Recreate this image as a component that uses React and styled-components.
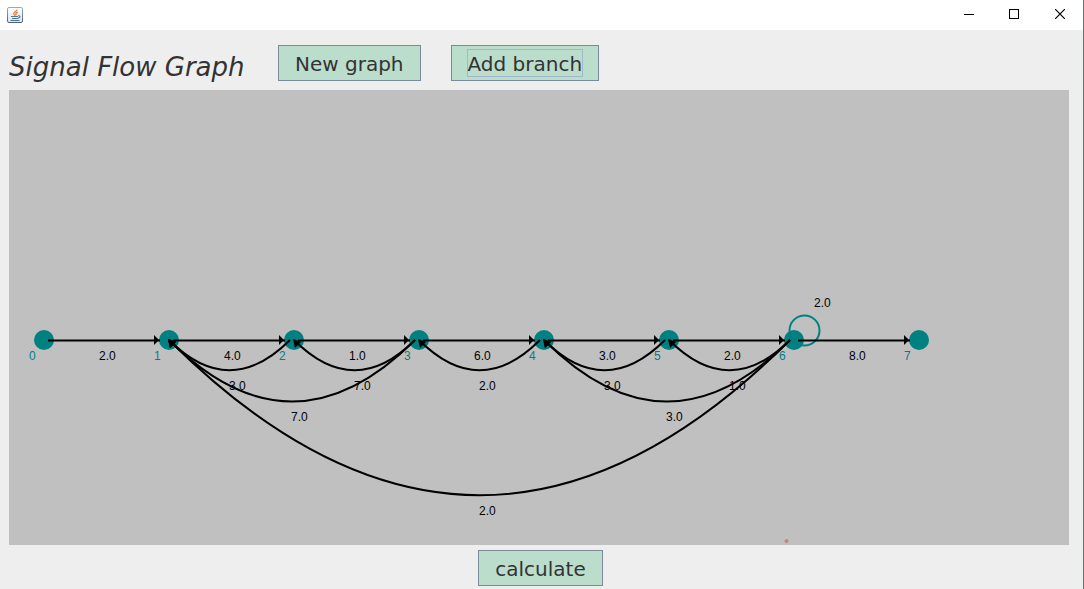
import React from "react";
import styled, { createGlobalStyle } from "styled-components";

const Global = createGlobalStyle`
  *, *::before, *::after { box-sizing: border-box; }
  body { margin: 0; background: #eeeeee; overflow: hidden; }
`;

const Window = styled.div`
  display: flex;
  flex-direction: column;
  min-height: 100vh;
  background: #eeeeee;
  border-right: 1px solid #66706c;
  color: #333333;
  font-family: Verdana, "DejaVu Sans", sans-serif;
`;

const TitleBar = styled.header`
  display: flex;
  align-items: center;
  justify-content: space-between;
  height: 30px;
  padding-left: 7px;
  background: #ffffff;
`;

const WindowControls = styled.div`
  display: flex;
`;

const ControlButton = styled.button`
  display: flex;
  align-items: center;
  justify-content: center;
  width: 46px;
  height: 30px;
  padding: 0 0 2px;
  border: 0;
  background: transparent;
`;

const Content = styled.main`
  display: flex;
  flex: 1;
  flex-direction: column;
  padding: 15px 14px 3px 9px;
`;

const Toolbar = styled.div`
  display: flex;
  align-items: center;
  gap: 30px;
  height: 36px;
  margin-bottom: 9px;
`;

const Title = styled.h1`
  width: 239px;
  margin: 0;
  padding-top: 8px;
  font-size: 26px;
  line-height: 32px;
  font-style: italic;
  font-weight: 400;
  white-space: nowrap;
`;

const ActionButton = styled.button`
  height: 36px;
  padding: 0 15px;
  border: 1px solid #7a8a99;
  border-radius: 0;
  background: #bbddcc;
  color: #333333;
  font-family: inherit;
  font-size: 20px;
  line-height: 26px;
  white-space: nowrap;
`;

const ButtonLabel = styled.span`
  display: block;
  height: 28px;
  padding-top: 1px;
  border: 1px solid ${(p) => (p.$focused ? "#a3b8cc" : "transparent")};
`;

const Canvas = styled.section`
  flex: 1;
  min-height: 455px;
  background: #c0c0c0;
  overflow: hidden;
`;

const Graph = styled.svg`
  display: block;
  font-family: "Liberation Sans", Arial, sans-serif;
  font-size: 12px;
`;

const Footer = styled.footer`
  display: flex;
  justify-content: center;
  padding: 5px 0 0 3px;
`;

const BASE = 250;
const nodeX = (n) => 35 + 125 * n;

const forward = ["2.0", "4.0", "1.0", "6.0", "3.0", "2.0", "8.0"];
const feedback = [
  { from: 2, to: 1, gain: "3.0" },
  { from: 3, to: 2, gain: "7.0" },
  { from: 4, to: 3, gain: "2.0" },
  { from: 5, to: 4, gain: "3.0" },
  { from: 6, to: 5, gain: "1.0" },
  { from: 3, to: 1, gain: "7.0" },
  { from: 6, to: 4, gain: "3.0" },
  { from: 6, to: 1, gain: "2.0" },
];

function ForwardBranch({ from, gain }) {
  const start = nodeX(from);
  const end = nodeX(from + 1);
  return (
    <g>
      <path d={`M${start + 4} ${BASE + 0.5}H${end - 9}`} stroke="#000" strokeWidth="2" />
      <path d={`M${end - 15} ${BASE - 5}l5 5l-5 5z`} />
      <text x={start + 55} y={BASE + 20}>{gain}</text>
    </g>
  );
}

function FeedbackBranch({ from, to, gain }) {
  const start = nodeX(from) - 4;
  const end = nodeX(to);
  const depth = ((from - to) * 125) / 4;
  return (
    <g>
      <path
        d={`M${start} ${BASE}Q${(start + end) / 2} ${BASE + depth * 2 - 2} ${end} ${BASE}`}
        fill="none"
        stroke="#000"
        strokeWidth="2"
      />
      <path d={`M${end - 1} ${BASE - 1}l8 3l-6 6z`} />
      <text x={Math.floor((nodeX(from) + end - 1) / 2) - 2} y={BASE + Math.floor(depth) + 19}>{gain}</text>
    </g>
  );
}

function JavaIcon() {
  return (
    <svg width="16" height="16" viewBox="0 0 16 16" aria-hidden="true">
      <defs>
        <linearGradient id="tile" x1="0" y1="0" x2="0" y2="1">
          <stop offset="0" stopColor="#ffffff" />
          <stop offset="1" stopColor="#dde3e8" />
        </linearGradient>
        <linearGradient id="rim" x1="0" y1="0" x2="0" y2="1">
          <stop offset="0" stopColor="#9aabb8" />
          <stop offset="1" stopColor="#496579" />
        </linearGradient>
      </defs>
      <rect x="0.5" y="0.5" width="15" height="15" rx="1.5" fill="url(#tile)" stroke="url(#rim)" />
      <path d="M10.2 2.5C10 4.5 6.5 5 6.7 6.8c.1.8 1 1.2 1 1.9M10.7 5.1C8.6 6 8.4 7 9 8.5" fill="none" stroke="#ed7b24" strokeWidth="1.2" />
      <path d="M4 9.5H11M5 11.5h6M3.5 13.5h9M11 8.8c2.6-.5 2.7 1.8.1 2.4" fill="none" stroke="#53768f" strokeWidth="1.1" />
    </svg>
  );
}

export default function App() {
  return (
    <>
      <Global />
      <Window>
        <TitleBar>
          <JavaIcon />
          <WindowControls>
            <ControlButton type="button" aria-label="Minimize">
              <svg width="12" height="10" shapeRendering="crispEdges"><path d="M2 5.5H12" stroke="#000" /></svg>
            </ControlButton>
            <ControlButton type="button" aria-label="Maximize">
              <svg width="10" height="10" shapeRendering="crispEdges"><path d="M.5 .5h9v9h-9z" fill="none" stroke="#000" /></svg>
            </ControlButton>
            <ControlButton type="button" aria-label="Close">
              <svg width="10" height="10"><path d="M0 0L10 10M10 0L0 10" stroke="#000" strokeWidth="1.2" /></svg>
            </ControlButton>
          </WindowControls>
        </TitleBar>
        <Content>
          <Toolbar>
            <Title>Signal Flow Graph</Title>
            <ActionButton type="button"><ButtonLabel>New graph</ButtonLabel></ActionButton>
            <ActionButton type="button"><ButtonLabel $focused>Add branch</ButtonLabel></ActionButton>
          </Toolbar>
          <Canvas>
            <Graph width="1060" height="455" role="img" aria-label="Signal flow graph">
              {Array.from({ length: 8 }, (_, n) => (
                <g key={n} fill="#008080">
                  <circle cx={nodeX(n)} cy={BASE} r="10" />
                  <text x={nodeX(n) - 15} y={BASE + 20}>{n}</text>
                </g>
              ))}
              <circle cx="795.5" cy="240.5" r="15" fill="none" stroke="#008080" strokeWidth="2" />
              <text x="805" y="217">2.0</text>
              {forward.map((gain, n) => <ForwardBranch key={n} from={n} gain={gain} />)}
              {feedback.map((b) => <FeedbackBranch key={`${b.from}-${b.to}`} {...b} />)}
              <circle cx="777.5" cy="451" r="2" fill="#cc8080" />
            </Graph>
          </Canvas>
          <Footer>
            <ActionButton type="button"><ButtonLabel>calculate</ButtonLabel></ActionButton>
          </Footer>
        </Content>
      </Window>
    </>
  );
}
